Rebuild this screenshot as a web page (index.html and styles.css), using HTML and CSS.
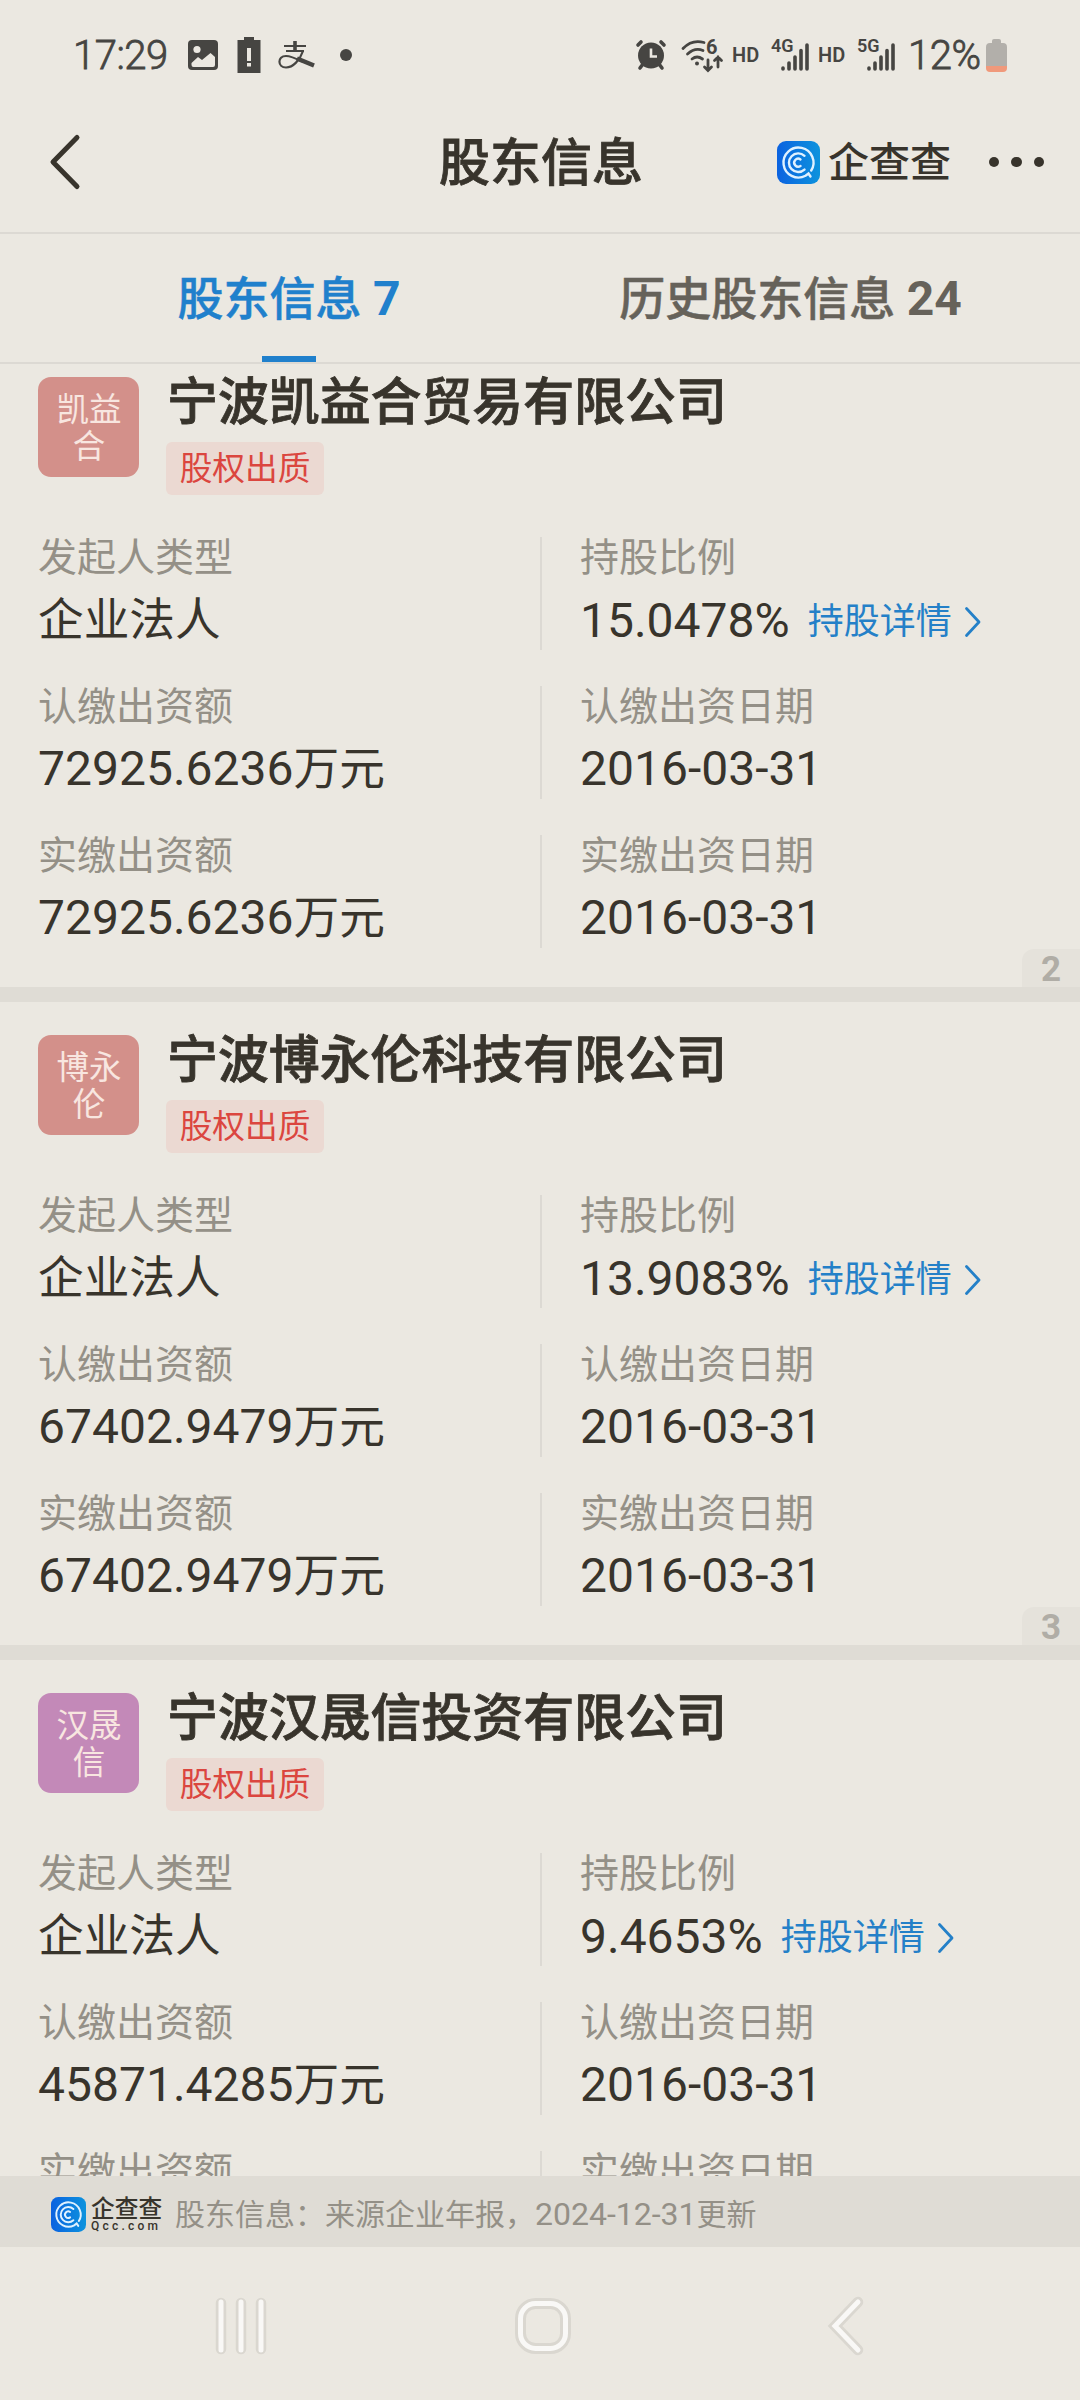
FILE: index.html
```
<!DOCTYPE html>
<html lang="zh-CN">
<head>
    <meta charset="UTF-8">
    <meta name="viewport" content="width=device-width, initial-scale=1.0">
    <title>股东信息</title>
    <link rel="stylesheet" href="styles.css">
</head>
<body>
    <!-- iconos reutilizables -->
    <svg width="0" height="0" class="defs">
        <defs>
            <linearGradient id="blue" x1="0" y1="0" x2="1" y2="0">
                <stop offset="0" stop-color="#0b62e0"/>
                <stop offset="1" stop-color="#0d93dd"/>
            </linearGradient>
            <symbol id="logo" viewBox="0 0 43 43">
                <rect width="43" height="43" rx="9" fill="url(#blue)"/>
                <g fill="none" stroke="#dff1ff" stroke-width="2.4" stroke-linecap="round">
                    <path d="M34.2 29.5A15 15 0 1 0 28.500 34.800L31.500 32.500L33.500 35.500"/>
                    <path d="M27.500 14.800A9.300 9.300 0 1 0 27.500 28.600"/>
                    <path d="M23.500 18.400A4 4 0 1 0 23.500 25"/>
                </g>
            </symbol>
            <symbol id="arrow" viewBox="0 0 18 32">
                <path d="M2.5 2.5L15 16L2.5 29.5" fill="none" stroke="#2480c8" stroke-width="2.8" stroke-linecap="round" stroke-linejoin="round"/>
            </symbol>
            <symbol id="signal" viewBox="0 0 28 30">
                <g stroke="#464542" stroke-width="3.6" stroke-linecap="round">
                    <path d="M2 26V27M8 21V27M14 15V27M20 8.500V27M26 3V27"/>
                </g>
            </symbol>
        </defs>
    </svg>

    <header class="status">
        <span class="time">17:29</span>
        <svg class="ico-image" width="30" height="30" viewBox="0 0 30 30">
            <rect width="30" height="30" rx="4" fill="#464542"/>
            <circle cx="9" cy="9.500" r="3.600" fill="#ebe8e1"/>
            <path d="M3.500 23L10 17L14 20L22.500 13L27 17V25Q27 27 25 27H5.500Q3.500 27 3.500 25Z" fill="#ebe8e1"/>
        </svg>
        <svg class="ico-alert" width="24" height="36" viewBox="0 0 24 36">
            <path d="M7 0H17V3H23.500V36H.5V3H7Z" fill="#464542"/>
            <path d="M10 11H14V24H10ZM10 26H14V29.500H10Z" fill="#ebe8e1"/>
        </svg>
        <svg class="ico-pay" width="36" height="28" viewBox="0 0 36 28">
            <g fill="none" stroke="#464542">
                <path d="M6 5H28M8 10H26" stroke-width="2"/>
                <path d="M17 0V10" stroke-width="3.600"/>
                <path d="M25 10C22 19 15 26.500 8 26.500C-.5 26.500 -1 15 8 15C13 15 18 17.500 24 20.500" stroke-width="2.200"/>
                <path d="M19 17.500L36 24.500" stroke-width="4.500"/>
            </g>
        </svg>
        <i class="dot"></i>

        <div class="status-right">
            <svg class="ico-alarm" width="30" height="30" viewBox="0 0 30 30">
                <g stroke="#464542" stroke-width="3.600" stroke-linecap="round">
                    <path d="M2 5L5 2M28 5L25 2M4 28L7 24M26 28L23 24"/>
                </g>
                <circle cx="15" cy="15.500" r="13" fill="#464542"/>
                <path d="M15 8.500V16.500H21" fill="none" stroke="#ebe8e1" stroke-width="2.600"/>
            </svg>
            <svg class="ico-wifi" width="42" height="33" viewBox="0 0 42 33">
                <g fill="none" stroke="#464542" stroke-width="2.800" stroke-linecap="round">
                    <path d="M2 9.500Q11 0 23 3.500M6.500 15Q14 8 22 11.500M11 20Q16 16 21.500 20"/>
                    <path d="M27 21V31M23.500 28L27 31.500L30.500 28M37 28V18M33.500 21.500L37 18L40.500 21.500"/>
                </g>
                <circle cx="16" cy="24.500" r="2" fill="#464542"/>
                <text x="25" y="15" class="svg-six">6</text>
            </svg>
            <span class="hd">HD</span>
            <span class="net"><b>4G</b><svg width="28" height="30"><use href="#signal"/></svg></span>
            <span class="hd">HD</span>
            <span class="net"><b>5G</b><svg width="28" height="30"><use href="#signal"/></svg></span>
            <span class="percent">12%</span>
            <svg class="ico-battery" width="21" height="33" viewBox="0 0 21 33">
                <path d="M6 4V2Q6 0 8 0H13Q15 0 15 2V4H17Q21 4 21 8V27H0V8Q0 4 4 4Z" fill="#b2afaa"/>
                <path d="M0 27H21V29Q21 33 17 33H4Q0 33 0 29Z" fill="#f0997b"/>
            </svg>
        </div>
    </header>

    <nav class="title-bar">
        <svg class="back" width="34" height="56" viewBox="0 0 34 56">
            <path d="M29 3.500L5 28L29 52.500" fill="none" stroke="#38342c" stroke-width="5" stroke-linecap="round" stroke-linejoin="round"/>
        </svg>
        <h1>股东信息</h1>
        <div class="brand">
            <svg width="43" height="43"><use href="#logo"/></svg>
            <span>企查查</span>
        </div>
        <div class="more"><i></i><i></i><i></i></div>
    </nav>

    <div class="tabs">
        <div class="tab active">股东信息 <b>7</b></div>
        <div class="tab">历史股东信息 <b>24</b></div>
    </div>

    <main class="list">
        <section class="card">
            <div class="head">
                <div class="avatar red">凯益<br>合</div>
                <div class="company">
                    <h2>宁波凯益合贸易有限公司</h2>
                    <span class="tag">股权出质</span>
                </div>
            </div>
            <div class="row">
                <div class="cell"><label>发起人类型</label><p><span>企业法人</span></p></div>
                <div class="cell"><label>持股比例</label><p>15.0478%<a>持股详情<svg width="18" height="32"><use href="#arrow"/></svg></a></p></div>
            </div>
            <div class="row">
                <div class="cell"><label>认缴出资额</label><p>72925.6236<span>万元</span></p></div>
                <div class="cell"><label>认缴出资日期</label><p>2016-03-31</p></div>
            </div>
            <div class="row">
                <div class="cell"><label>实缴出资额</label><p>72925.6236<span>万元</span></p></div>
                <div class="cell"><label>实缴出资日期</label><p>2016-03-31</p></div>
            </div>
            <div class="index">2</div>
        </section>

        <section class="card">
            <div class="head">
                <div class="avatar red">博永<br>伦</div>
                <div class="company">
                    <h2>宁波博永伦科技有限公司</h2>
                    <span class="tag">股权出质</span>
                </div>
            </div>
            <div class="row">
                <div class="cell"><label>发起人类型</label><p><span>企业法人</span></p></div>
                <div class="cell"><label>持股比例</label><p>13.9083%<a>持股详情<svg width="18" height="32"><use href="#arrow"/></svg></a></p></div>
            </div>
            <div class="row">
                <div class="cell"><label>认缴出资额</label><p>67402.9479<span>万元</span></p></div>
                <div class="cell"><label>认缴出资日期</label><p>2016-03-31</p></div>
            </div>
            <div class="row">
                <div class="cell"><label>实缴出资额</label><p>67402.9479<span>万元</span></p></div>
                <div class="cell"><label>实缴出资日期</label><p>2016-03-31</p></div>
            </div>
            <div class="index">3</div>
        </section>

        <section class="card">
            <div class="head">
                <div class="avatar purple">汉晟<br>信</div>
                <div class="company">
                    <h2>宁波汉晟信投资有限公司</h2>
                    <span class="tag">股权出质</span>
                </div>
            </div>
            <div class="row">
                <div class="cell"><label>发起人类型</label><p><span>企业法人</span></p></div>
                <div class="cell"><label>持股比例</label><p>9.4653%<a>持股详情<svg width="18" height="32"><use href="#arrow"/></svg></a></p></div>
            </div>
            <div class="row">
                <div class="cell"><label>认缴出资额</label><p>45871.4285<span>万元</span></p></div>
                <div class="cell"><label>认缴出资日期</label><p>2016-03-31</p></div>
            </div>
            <div class="row">
                <div class="cell"><label>实缴出资额</label></div>
                <div class="cell"><label>实缴出资日期</label></div>
            </div>
        </section>
    </main>

    <footer class="source">
        <svg width="35" height="35"><use href="#logo"/></svg>
        <div class="source-brand"><b>企查查</b><small>Qcc.com</small></div>
        <p>股东信息：来源企业年报，<span>2024-12-31</span>更新</p>
    </footer>

    <div class="nav-keys">
        <svg width="54" height="60" viewBox="0 0 54 60">
            <g stroke-linecap="round">
                <path d="M7 7V53M27 7V53M47 7V53" stroke="#dad7d0" stroke-width="10.500"/>
                <path d="M7 6V54M27 6V54M47 6V54" stroke="#f9f8f6" stroke-width="5"/>
            </g>
        </svg>
        <svg width="60" height="60" viewBox="0 0 60 60" fill="none">
            <rect x="7.500" y="7.500" width="45" height="45" rx="15" stroke="#dad7d0" stroke-width="11"/>
            <rect x="7.500" y="7.500" width="45" height="45" rx="15" stroke="#f9f8f6" stroke-width="5"/>
        </svg>
        <svg width="40" height="60" viewBox="0 0 40 60" fill="none" stroke-linecap="round">
            <path d="M32 6L9 30L32 54" stroke="#dad7d0" stroke-width="10.500"/>
            <path d="M32 6L9 30L32 54" stroke="#f9f8f6" stroke-width="5"/>
        </svg>
    </div>
</body>
</html>
```
FILE: styles.css
```
* {
    box-sizing: border-box;
}
body {
    margin: 0;
    width: 1080px;
    height: 2400px;
    overflow: hidden;
    display: flex;
    flex-direction: column;
    background-color: #ebe8e1;
    color: #38342c;
    font-family: Roboto, "Noto Sans CJK SC", sans-serif;
}
h1, h2, p {
    margin: 0;
}
svg {
    display: block;
    flex: none;
    overflow: visible;
}
.defs {
    position: absolute;
}

/* barra de estado */
.status {
    height: 110px;
    display: flex;
    align-items: center;
    padding-left: 73px;
    color: #464542;
}
.time, .percent {
    font-size: 40px;
    line-height: 48px;
    font-weight: 300;
    letter-spacing: -0.5px;
    -webkit-text-stroke: 0.8px #464542;
}
.time {
    width: 97px;
    padding-top: 1px;
}
.ico-image {
    margin-left: 18px;
}
.ico-alert {
    margin-left: 19px;
}
.ico-pay {
    margin-left: 17px;
}
.dot {
    width: 12px;
    height: 12px;
    margin-left: 26px;
    border-radius: 50%;
    background-color: #464542;
}
.status-right {
    margin-left: auto;
    margin-right: 73px;
    display: flex;
    align-items: center;
}
.ico-wifi {
    margin-left: 15px;
}
.svg-six {
    font-size: 20px;
    font-weight: bold;
    fill: #464542;
}
.hd {
    width: 28px;
    margin-left: 9px;
    font-size: 20px;
    line-height: 24px;
    font-weight: 600;
}
.net {
    display: flex;
    width: 38px;
    height: 34px;
    margin-left: 11px;
}
.net b {
    width: 10px;
    font-size: 18px;
    line-height: 16px;
    font-weight: 600;
}
.net svg {
    margin-top: 4px;
}
.percent {
    width: 72px;
    margin-left: 13px;
    padding-top: 1px;
}
.ico-battery {
    margin-left: 6px;
}

/* titulo */
.title-bar {
    position: relative;
    height: 124px;
    padding: 0 36px 18px 48px;
    display: flex;
    align-items: center;
    border-bottom: 2px solid #dcd9d3;
}
h1 {
    width: 204px;
    margin-left: 357px;
    padding-top: 3px;
    font-size: 51px;
    line-height: 60px;
    font-weight: 500;
    -webkit-text-stroke: 0.8px #38342c;
}
.brand {
    margin-left: 134px;
    display: flex;
    align-items: center;
    gap: 8px;
    font-size: 41px;
    line-height: 48px;
    font-weight: 500;
}
.brand span {
    padding-top: 2px;
}
.more {
    margin-left: auto;
    display: flex;
    gap: 12px;
}
.more i {
    width: 10.5px;
    height: 10.5px;
    border-radius: 50%;
    background-color: #38342c;
}

/* pestañas */
.tabs {
    height: 130px;
    display: flex;
    border-bottom: 2px solid #dcd9d3;
}
.tab {
    position: relative;
    width: 502px;
    padding: 35px 77px 0 0;
    text-align: center;
    white-space: nowrap;
    font-size: 46px;
    line-height: 60px;
    font-weight: 500;
    color: #66625a;
    -webkit-text-stroke: 0.5px currentColor;
}
.tab b {
    font-size: 48px;
    -webkit-text-stroke: 0;
}
.tab.active {
    width: 578px;
    padding-right: 0;
    color: #2080cc;
}
.tab.active::after {
    content: "";
    position: absolute;
    left: 50%;
    bottom: 0;
    width: 54px;
    height: 6px;
    margin-left: -27px;
    background-color: #2080cc;
}

/* lista */
.list {
    height: 1812px;
    overflow: hidden;
}
.card {
    position: relative;
    height: 658px;
    padding: 33px 0 0 38px;
    border-bottom: 15px solid #dfdcd5;
}
.card:first-child {
    margin-top: -20px;
}
.head {
    display: flex;
    height: 160px;
}
.avatar {
    width: 101px;
    height: 100px;
    padding-top: 15px;
    padding-left: 1px;
    border-radius: 13px;
    color: #f8e6e0;
    font-size: 32.5px;
    line-height: 37px;
    text-align: center;
}
.red {
    background-color: #d3908a;
}
.purple {
    background-color: #c389b8;
}
.company {
    margin-left: 27px;
}
h2 {
    height: 65px;
    margin-top: -4px;
    padding-left: 1px;
    font-size: 50.9px;
    line-height: 60px;
    font-weight: 500;
    -webkit-text-stroke: 0.8px #38342c;
}
.tag {
    display: block;
    width: 158px;
    height: 53px;
    margin-top: 4px;
    border-radius: 6px;
    background-color: #ebd9d2;
    color: #db463f;
    font-size: 32.7px;
    line-height: 54px;
    text-align: center;
}
.row {
    display: flex;
    height: 113px;
    margin-bottom: 36px;
}
.cell {
    width: 502px;
}
.cell + .cell {
    width: 540px;
    padding-left: 38px;
    border-left: 2px solid #dcd9d3;
}
.cell label {
    display: block;
    margin-bottom: 10px;
    color: #949087;
    font-size: 39px;
    line-height: 43px;
}
.cell p {
    display: flex;
    align-items: baseline;
    font-size: 48px;
    line-height: 59px;
}
.head + .row p {
    padding-top: 1px;
}
.cell p span {
    font-size: 45.7px;
}
.cell a {
    display: flex;
    align-items: center;
    align-self: flex-start;
    margin-left: 18px;
    margin-top: -1px;
    color: #2480c8;
    font-size: 36px;
    line-height: 65px;
}
.cell a svg {
    margin-left: 12px;
    margin-bottom: 2px;
}
.index {
    position: absolute;
    right: 0;
    bottom: 0;
    width: 58px;
    height: 38px;
    border-radius: 12px 0 0 0;
    background-color: #e5e2db;
    color: #b0ada6;
    font-size: 35px;
    line-height: 41px;
    font-weight: bold;
    text-align: center;
}

/* fuente de datos */
.source {
    height: 71px;
    display: flex;
    align-items: center;
    padding: 5px 0 0 51px;
    background-color: #dfdcd5;
}
.source-brand {
    width: 72px;
    margin-left: 5px;
    display: flex;
    flex-direction: column;
}
.source-brand b {
    font-size: 23.7px;
    line-height: 24px;
    font-weight: 500;
}
.source-brand small {
    font-size: 12px;
    line-height: 11px;
    font-weight: 500;
    letter-spacing: 3.2px;
}
.source p {
    margin-left: 12px;
    color: #949087;
    font-size: 30px;
    line-height: 40px;
}
.source p span {
    font-size: 32px;
}

/* botones del sistema */
.nav-keys {
    flex: 1;
    display: flex;
    padding: 49px 0 0 214px;
}
.nav-keys svg + svg {
    margin-left: 245px;
}
.nav-keys svg:last-child {
    margin-left: 253px;
}
```
